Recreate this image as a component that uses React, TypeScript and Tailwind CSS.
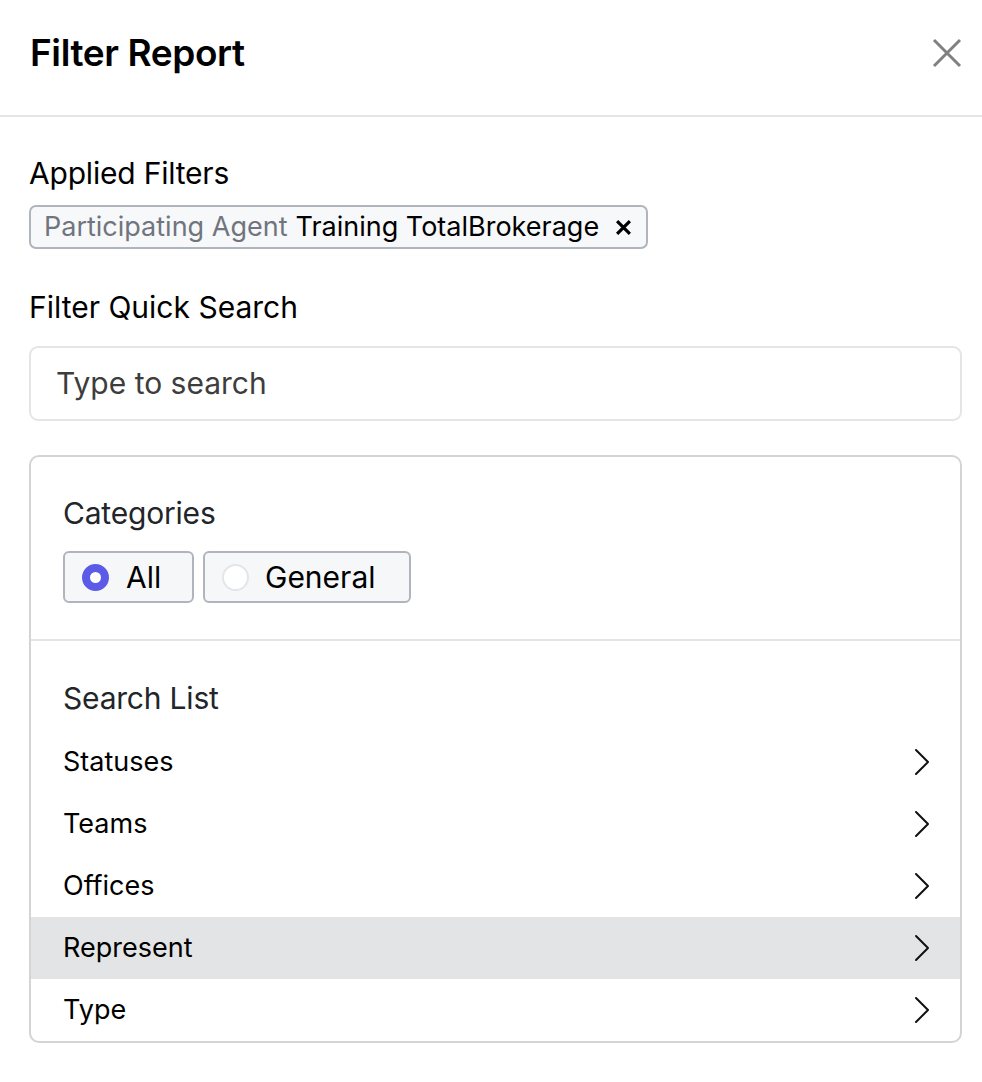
import React from "react";

const Chevron = () => (
  <svg width="16" height="28" viewBox="0 0 16 28" fill="none" stroke="#111" strokeWidth="2" strokeLinecap="round" strokeLinejoin="round">
    <path d="M2 2 L14 14 L2 26" />
  </svg>
);

const items = ["Statuses", "Teams", "Offices", "Represent", "Type"];

export default function App() {
  return (
    <div className="w-[982px] min-h-[1082px] bg-white text-black" style={{ fontFamily: "Inter, 'Noto Sans', sans-serif" }}>
      <div className="h-[117px] border-b-2 border-[#e3e5e8] flex items-center justify-between pl-[30px] pr-[20px] pb-[10px]">
        <h1 className="text-[37px] font-semibold tracking-[-0.4px]">Filter Report</h1>
        <svg width="30" height="30" viewBox="0 0 30 30" stroke="#808080" strokeWidth="3">
          <path d="M2 2 L28 28 M28 2 L2 28" />
        </svg>
      </div>
      <div className="pl-[29px] pr-[20px] pt-[38px]">
        <div className="text-[30px] leading-[36px] tracking-[-0.2px]">Applied Filters</div>
        <div className="mt-[14px] inline-flex items-center h-[44px] pl-[13px] pr-[14px] bg-[#f7f8fa] border-2 border-[#b0b5bd] rounded-[7px] text-[27px]">
          <span className="text-[#70757d]">Participating Agent</span>
          <span className="ml-[8px]">Training TotalBrokerage</span>
          <svg width="17" height="17" viewBox="0 0 16 16" stroke="#000" strokeWidth="3" className="ml-[16px]">
            <path d="M2 2 L14 14 M14 2 L2 14" />
          </svg>
        </div>
        <div className="mt-[40px] text-[30px] leading-[36px]">Filter Quick Search</div>
        <div className="mt-[21px] h-[75px] border-2 border-[#e3e5e8] rounded-[9px] flex items-center pl-[25px] text-[30px] text-[#3d3d3d]">
          Type to search
        </div>
        <div className="mt-[34px] border-2 border-[#d4d4d4] rounded-[10px] overflow-hidden">
          <div className="px-[32px] pt-[38px] pb-[36px] border-b-2 border-[#e3e5e8]">
            <div className="text-[30px] leading-[36px] text-[#22252a] tracking-[-0.2px]">Categories</div>
            <div className="mt-[20px] flex gap-[9px]">
              <div className="h-[52px] w-[131px] flex items-center pl-[17px] bg-[#f6f7f9] border-2 border-[#b0b5bd] rounded-[6px]">
                <div className="w-[27px] h-[27px] rounded-full border-[8px] border-[#5b5be8] bg-white" />
                <span className="ml-[17px] text-[30px]">All</span>
              </div>
              <div className="h-[52px] w-[208px] flex items-center pl-[17px] bg-[#f6f7f9] border-2 border-[#b0b5bd] rounded-[6px]">
                <div className="w-[27px] h-[27px] rounded-full border-2 border-[#e3e5e8] bg-white" />
                <span className="ml-[16px] text-[30px]">General</span>
              </div>
            </div>
          </div>
          <div className="pt-[39px]">
            <div className="px-[32px] text-[30px] leading-[36px] text-[#22252a] mb-[15px] tracking-[-0.2px]">Search List</div>
            {items.map((it) => (
              <div
                key={it}
                className={`h-[62px] flex items-center justify-between pl-[32px] pr-[30px] text-[27px] ${it === "Represent" ? "bg-[#e3e4e6]" : ""}`}
              >
                <span>{it}</span>
                <Chevron />
              </div>
            ))}
          </div>
        </div>
      </div>
    </div>
  );
}
